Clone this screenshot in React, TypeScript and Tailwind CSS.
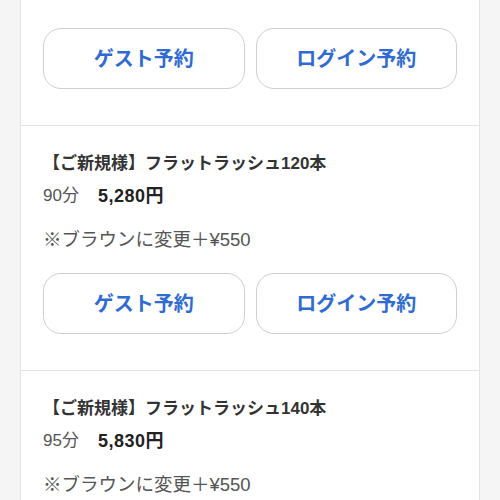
const font = { fontFamily: '"Liberation Sans", "Noto Sans CJK JP", sans-serif' };

type Menu = { title: string; minutes: string; price: string };

const menus: Menu[] = [
  { title: "【ご新規様】フラットラッシュ120本", minutes: "90分", price: "5,280円" },
  { title: "【ご新規様】フラットラッシュ140本", minutes: "95分", price: "5,830円" },
];

function Buttons() {
  return (
    <div className="grid grid-cols-2 gap-[11px]">
      <button className="h-[61px] rounded-[18px] border border-[#cfcfcf] bg-white text-[20px] font-bold text-[#2f6bd3]">
        ゲスト予約
      </button>
      <button className="h-[61px] rounded-[18px] border border-[#cfcfcf] bg-white text-[20px] font-bold text-[#2f6bd3]">
        ログイン予約
      </button>
    </div>
  );
}

function MenuItem({ menu }: { menu: Menu }) {
  return (
    <div className="border-t border-[#e3e3e3] px-[22px] pt-[25px] pb-[36px]">
      <h3 className="text-[17px] leading-[26px] font-semibold text-[#333]">{menu.title}</h3>
      <div className="mt-[6px] flex h-[26px] items-center">
        <span className="text-[17px] leading-[26px] text-[#555]">{menu.minutes}</span>
        <span className="ml-[19px] text-[18px] leading-[26px] font-bold tracking-[0.5px] text-[#222]">
          {menu.price}
        </span>
      </div>
      <p className="mt-[18px] h-[26px] text-[18.5px] leading-[26px] text-[#555]">※ブラウンに変更＋¥550</p>
      <div className="mt-[20px]">
        <Buttons />
      </div>
    </div>
  );
}

export default function App() {
  return (
    <div className="h-[500px] overflow-hidden bg-[#f5f5f5] px-[20px]" style={font}>
      <div className="h-full border-x border-[#e3e3e3] bg-white">
        {/* tail of the previous menu */}
        <div className="px-[22px] pt-[28px] pb-[36px]">
          <Buttons />
        </div>
        {menus.map((m) => (
          <MenuItem key={m.title} menu={m} />
        ))}
      </div>
    </div>
  );
}
